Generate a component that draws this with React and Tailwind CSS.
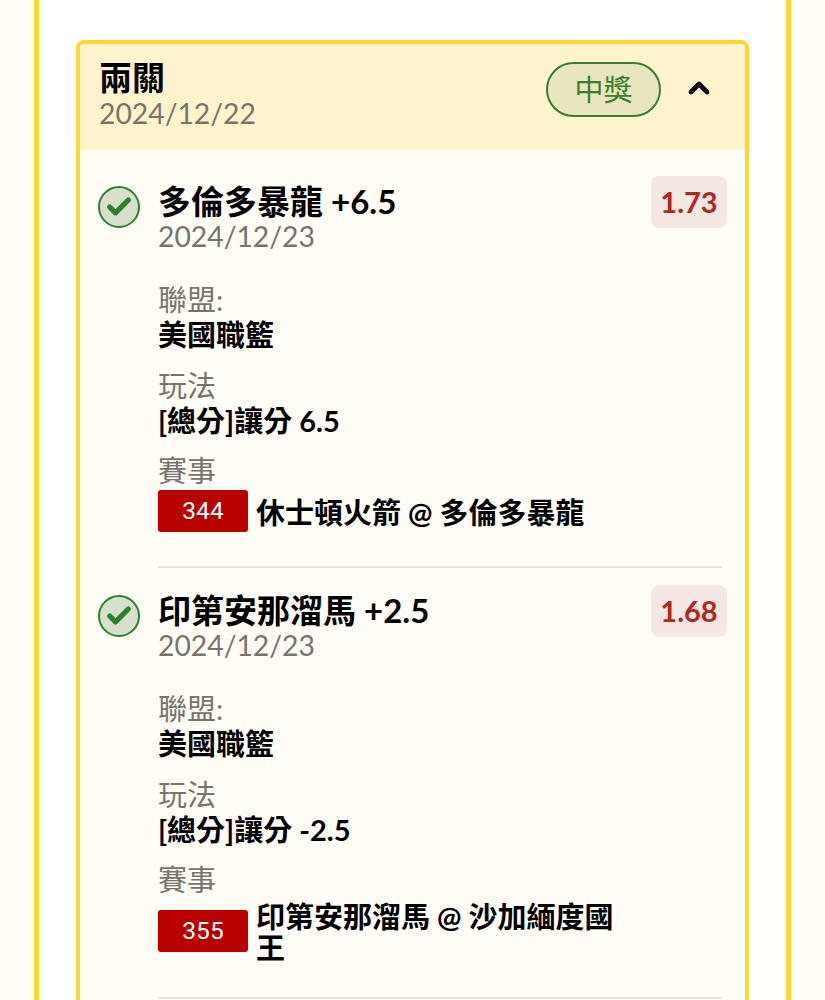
import React from "react";
import { ChevronUp, Check } from "lucide-react";

const font = "font-['Lato','Noto_Sans_CJK_TC',sans-serif]";

const legs = [
  {
    team: "多倫多暴龍 +6.5",
    date: "2024/12/23",
    odds: "1.73",
    league: "美國職籃",
    play: "[總分]讓分 6.5",
    code: "344",
    game: "休士頓火箭 @ 多倫多暴龍",
  },
  {
    team: "印第安那溜馬 +2.5",
    date: "2024/12/23",
    odds: "1.68",
    league: "美國職籃",
    play: "[總分]讓分 -2.5",
    code: "355",
    game: "印第安那溜馬 @ 沙加緬度國王",
  },
];

const Field = ({ label, value }) => {
  return (
    <div className="mt-[15px] first:mt-0">
      <div className="text-[#77746c] text-[29px] leading-[36px]">{label}</div>
      <div className="text-black text-[29px] leading-[34px] font-bold">{value}</div>
    </div>
  );
};

const Leg = ({ leg }) => {
  return (
    <div className="flex border-b-2 border-[#e6e4dc] pb-[34px] mb-[23px]">
      <div className="w-[60px] shrink-0 -ml-[60px] pt-[4px]">
        <div className="w-[42px] h-[42px] rounded-full border-2 border-[#2f7d2f] bg-[#d6e0cc] flex items-center justify-center">
          <Check className="w-[28px] h-[28px] text-[#2f7d2f]" strokeWidth={4.5} />
        </div>
      </div>
      <div className="flex-1">
        <div className="flex justify-between items-start">
          <div>
            <div className="text-black text-[33px] leading-[38px] font-bold">{leg.team}</div>
            <div className="text-[#77746c] text-[28.3px] leading-[32px]">{leg.date}</div>
          </div>
          <div className="mt-[-6px] -mr-[5px] w-[76px] h-[52px] rounded-lg bg-[#f5e8e2] text-[#b3261e] text-[29px] font-bold flex items-center justify-center">
            {leg.odds}
          </div>
        </div>
        <div className="mt-[30px]">
          <Field label="聯盟:" value={leg.league} />
          <div className="mt-[16px]">
            <Field label="玩法" value={leg.play} />
          </div>
          <div className="mt-[15px]">
            <div className="text-[#77746c] text-[29px] leading-[36px]">賽事</div>
            <div className="flex items-center gap-[8px] w-[460px] mt-[1px]">
              <div className="w-[90px] h-[42px] shrink-0 rounded-[3px] bg-[#b80000] text-white text-[24.5px] font-['Roboto',sans-serif] flex items-center justify-center">
                {leg.code}
              </div>
              <div className="text-black text-[29px] leading-[31px] font-bold pt-[2px]">{leg.game}</div>
            </div>
          </div>
        </div>
      </div>
    </div>
  );
};

const App = () => {
  return (
    <div className={`${font} h-[1000px] overflow-hidden bg-[#fffdf6] px-[34px]`}>
      <div className="h-full border-x-[5px] border-[#fdd835] bg-white px-[37px] pt-[40px]">
        <div className="rounded-lg border-4 border-[#fdd835] overflow-hidden">
          <div className="h-[106px] bg-[#fdf3cc] flex items-start justify-between pl-[19px] pr-[30px] pt-[15px]">
            <div>
              <div className="text-black text-[33px] leading-[37px] font-bold">兩關</div>
              <div className="text-[#77746c] text-[28.3px] leading-[34px]">2024/12/22</div>
            </div>
            <div className="flex items-center gap-[22px] mt-[3px]">
              <div className="w-[115px] h-[55px] rounded-full border-2 border-[#3b7d2f] bg-[#e8e6bf] text-[#3b7d2f] text-[29px] flex items-center justify-center">
                中獎
              </div>
              <ChevronUp className="w-[32px] h-[32px] mb-[3px] text-black" strokeWidth={3.5} />
            </div>
          </div>
          <div className="bg-[#fffdf6] pl-[78px] pr-[23px] pt-[32px] pb-[40px]">
            {legs.map((leg) => (
              <Leg key={leg.code} leg={leg} />
            ))}
          </div>
        </div>
      </div>
    </div>
  );
};

export default App;
